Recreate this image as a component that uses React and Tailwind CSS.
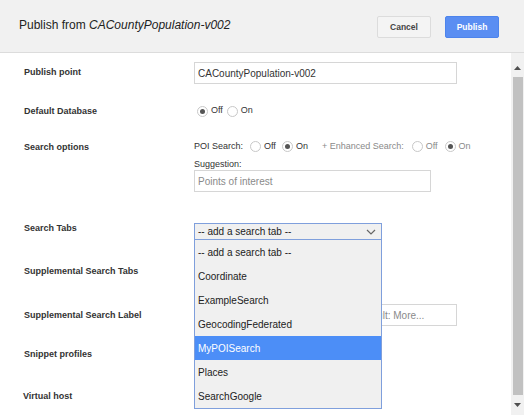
import React from 'react';

const Radio = ({ checked }) => (
  <span className="w-[11px] h-[11px] rounded-full border border-[#c8c8c8] bg-white flex items-center justify-center shrink-0">
    {checked && <span className="w-[5px] h-[5px] rounded-full bg-[#555]" />}
  </span>
);

const Option = ({ label, checked, muted }) => (
  <span className={`flex items-center gap-[3px] ${muted ? 'text-[#8a8a8a]' : 'text-[#333]'}`}>
    <Radio checked={checked} />
    <span>{label}</span>
  </span>
);

const tabs = [
  '-- add a search tab --',
  'Coordinate',
  'ExampleSearch',
  'GeocodingFederated',
  'MyPOISearch',
  'Places',
  'SearchGoogle',
];

const App = () => {
  return (
    <div className="w-[524px] h-[415px] flex flex-col overflow-hidden bg-white font-['Liberation_Sans',Arial,sans-serif] text-[#333]">
      {/* Header */}
      <div className="h-[53px] shrink-0 flex items-center bg-[#f1f1f1] border-b border-[#dcdcdc] pl-[19px] pr-[25px]">
        <h1 className="text-[12px] leading-[14px] text-[#222] mb-[2px] flex-1">
          Publish from <i>CACountyPopulation-v002</i>
        </h1>
        <button className="w-[54px] h-[22px] mt-[2px] rounded-[2px] border border-[#dcdcdc] bg-[#f4f4f4] text-[8.5px] font-bold text-[#444]">
          Cancel
        </button>
        <button className="w-[54px] h-[22px] mt-[2px] ml-[14px] rounded-[2px] border border-[#4d84ec] bg-[#5a8ef2] text-[8.5px] font-bold text-white">
          Publish
        </button>
      </div>

      <div className="flex-1 flex min-h-0">
        {/* Form */}
        <div className="flex-1 relative overflow-hidden text-[9px]">
          <div className="flex items-start mt-[9px]">
            <label className="w-[194px] pl-[24px] pt-[5px] leading-[11px] font-bold">Publish point</label>
            <input
              readOnly
              value="CACountyPopulation-v002"
              className="w-[263px] h-[22px] px-[3px] border border-[#d6d6d6] text-[10px] text-[#333] outline-none"
            />
          </div>

          <div className="flex items-center mt-[21px] h-[12px]">
            <label className="w-[194px] pl-[24px] leading-[11px] font-bold">Default Database</label>
            <div className="flex items-center gap-[4px] pl-[3px]">
              <Option label="Off" checked />
              <Option label="On" />
            </div>
          </div>

          <div className="flex items-start mt-[23px]">
            <label className="w-[194px] pl-[24px] pt-[2px] leading-[11px] font-bold">Search options</label>
            <div className="flex flex-col">
              <div className="flex items-center h-[12px] leading-[11px]">
                <span className="mr-[7px]">POI Search:</span>
                <div className="flex items-center gap-[6px]">
                  <Option label="Off" />
                  <Option label="On" checked />
                </div>
                <span className="ml-[14px] mr-[8px] text-[#8a8a8a]">+ Enhanced Search:</span>
                <div className="flex items-center gap-[7px]">
                  <Option label="Off" muted />
                  <Option label="On" checked muted />
                </div>
              </div>
              <span className="mt-[7px] leading-[11px]">Suggestion:</span>
              <input
                readOnly
                placeholder="Points of interest"
                className="w-[237px] h-[22px] px-[3px] border border-[#d6d6d6] text-[10px] placeholder:text-[#8a8a8a] outline-none"
              />
            </div>
          </div>

          <div className="flex items-start mt-[31px]">
            <label className="w-[194px] pl-[24px] leading-[11px] font-bold">Search Tabs</label>
            <div className="w-[188px] h-[17px] flex items-center justify-between pl-[3px] pr-[5px] border border-[#7f9fdc] bg-[#f0f0f0] text-[10px] text-[#222]">
              <span>-- add a search tab --</span>
              <svg width="10" height="6" viewBox="0 0 10 6" fill="none" stroke="#666" strokeWidth="1.2">
                <path d="M1 1l4 4 4-4" />
              </svg>
            </div>
          </div>

          <div className="flex items-center mt-[20px] h-[22px]">
            <label className="w-[194px] pl-[24px] leading-[11px] font-bold">Supplemental Search Tabs</label>
          </div>

          <div className="flex items-center mt-[22px] h-[22px]">
            <label className="w-[194px] pl-[24px] leading-[11px] font-bold">Supplemental Search Label</label>
            <input
              readOnly
              placeholder="Default: More..."
              className="ml-[158px] w-[105px] h-[22px] px-[3px] border border-[#d6d6d6] text-[10px] placeholder:text-[#8a8a8a] outline-none"
            />
          </div>

          <div className="flex items-center mt-[17px] h-[22px]">
            <label className="w-[194px] pl-[24px] leading-[11px] font-bold">Snippet profiles</label>
          </div>

          <div className="flex items-center mt-[20px] h-[22px]">
            <label className="w-[194px] pl-[23px] leading-[11px] font-bold">Virtual host</label>
          </div>

          {/* Open dropdown list */}
          <ul className="absolute left-[194px] top-[187px] w-[188px] border border-[#7f9fdc] border-t-0 bg-[#f0f0f0] text-[10px] text-[#222]">
            {tabs.map((t) => (
              <li
                key={t}
                className={`h-[24px] flex items-center pl-[3px] ${t === 'MyPOISearch' ? 'bg-[#4c8ef7] text-white' : ''}`}
              >
                {t}
              </li>
            ))}
          </ul>
        </div>

        {/* Scrollbar */}
        <div className="w-[13px] shrink-0 flex flex-col items-center bg-[#f1f1f1]">
          <div className="h-[17px] flex items-end justify-center">
            <svg width="7" height="4" viewBox="0 0 7 4"><path d="M3.5 0L7 4H0z" fill="#505050" /></svg>
          </div>
          <div className="w-[10px] flex-1 mt-[7px] bg-[#c1c1c1]" />
          <div className="h-[20px] flex items-center justify-center">
            <svg width="7" height="4" viewBox="0 0 7 4"><path d="M0 0h7L3.5 4z" fill="#505050" /></svg>
          </div>
        </div>
      </div>
    </div>
  );
};

export default App;
